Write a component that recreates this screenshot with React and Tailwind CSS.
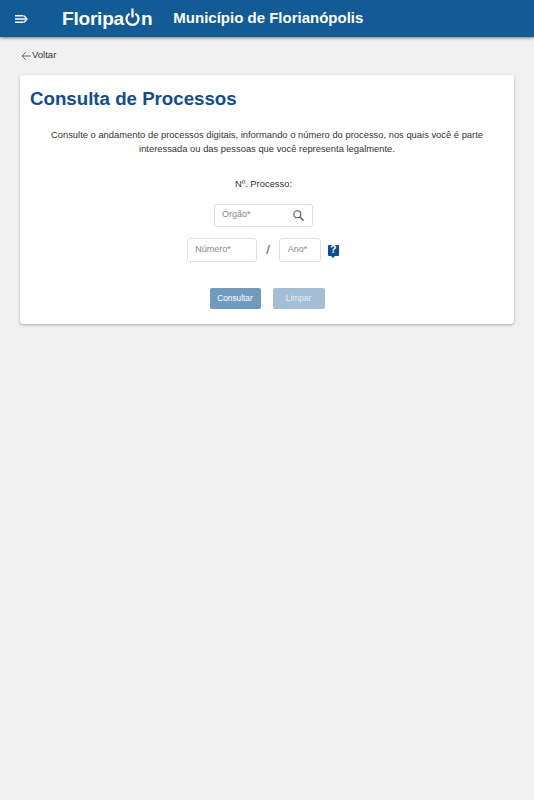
const App = () => {
    return (
        <div className="min-h-[800px] bg-[#f1f1f1] font-['Liberation_Sans',Arial,sans-serif]">
            <header className="flex items-center h-[37px] bg-[#135b96] shadow-[0_1px_3px_rgba(0,0,0,0.5)] text-white">
                <svg className="ml-[15px]" width="13" height="8" viewBox="0 0 13 8" fill="none" stroke="white" strokeWidth="1.4">
                    <path d="M0 .8h8.5M0 4h10.5M0 7.2h8.5M9 .7 12 4 9 7.3" />
                </svg>
                <div className="flex items-center ml-[34px] text-[19px] font-bold leading-none tracking-[-0.2px]">
                    <span>Floripa</span>
                    <svg className="ml-[1px] -mt-[3px]" width="15" height="18" viewBox="0 0 15 18" fill="none" stroke="white" strokeWidth="2.2">
                        <path d="M4.6 5.6a6 6 0 1 0 5.8 0" />
                        <path d="M7.5 .5v9" />
                    </svg>
                    <span className="ml-[1px]">n</span>
                </div>
                <h1 className="ml-[21px] text-[15px] font-bold">Município de Florianópolis</h1>
            </header>

            <div className="flex items-center pl-[21px] mt-[12px] h-[13px] text-[9.5px] text-[#333]">
                <svg width="11" height="10" viewBox="0 0 11 10" fill="none" stroke="#555" strokeWidth="0.9">
                    <path d="M10 5H1.2M4.8 1.2 1 5l3.8 3.8" />
                </svg>
                <span>Voltar</span>
            </div>

            <main className="mx-[20px] mt-[13px] h-[249px] bg-white rounded-[3px] shadow-[0_1px_3px_rgba(0,0,0,0.3)] px-[10px] pt-[13px]">
                <h2 className="text-[18.7px] leading-[22px] font-bold text-[#0f4c96]">Consulta de Processos</h2>
                <p className="mt-[18px] text-center text-[9.4px] leading-[14px] text-[#333]">
                    Consulte o andamento de processos digitais, informando o número do processo, nos quais você é parte
                    <br />
                    interessada ou das pessoas que você representa legalmente.
                </p>

                <p className="mt-[21px] mr-[7px] text-center text-[9.4px] leading-[14px] text-[#333]">Nº. Processo:</p>

                <div className="flex justify-center mt-[13px] mr-[7px]">
                    <div className="flex items-center justify-between w-[99px] h-[23px] pl-[7px] pr-[8px] border border-[#ddd] rounded-[3px] text-[9px] text-[#888]">
                        <span className="-mt-[1px]">Órgão*</span>
                        <svg width="11" height="11" viewBox="0 0 11 11" fill="none" stroke="#555" strokeWidth="1.1">
                            <circle cx="4.3" cy="4.3" r="3.5" />
                            <path d="M7 7l3.6 3.6" strokeWidth="1.4" />
                        </svg>
                    </div>
                </div>

                <div className="flex justify-center items-center mt-[11px] mr-[8px]">
                    <div className="flex items-center w-[70px] h-[24px] pl-[7px] border border-[#ddd] rounded-[3px] text-[9px] text-[#888]">Número*</div>
                    <span className="ml-[9px] text-[13px] text-[#555]">/</span>
                    <div className="flex items-center ml-[9px] w-[42px] h-[24px] pl-[8px] border border-[#ddd] rounded-[3px] text-[9px] text-[#888]">Ano*</div>
                    <div className="relative ml-[7px] w-[11px] h-[11px] bg-[#0f4c96] rounded-[1px] flex items-center justify-center text-white text-[10px] font-bold leading-none">
                        ?
                        <span className="absolute left-[3px] -bottom-[2px] w-0 h-0 border-x-[2.5px] border-x-transparent border-t-[2.5px] border-t-[#0f4c96]"></span>
                    </div>
                </div>

                <div className="flex justify-center mt-[26px] gap-[12px]">
                    <button className="w-[51px] h-[21px] rounded-[2px] bg-[#6f9bc0] text-white text-[8.3px]">Consultar</button>
                    <button className="w-[52px] h-[21px] rounded-[2px] bg-[#a3bfd7] text-[#e8eff5] text-[8.3px]">Limpar</button>
                </div>
            </main>
        </div>
    );
}

export default App;
